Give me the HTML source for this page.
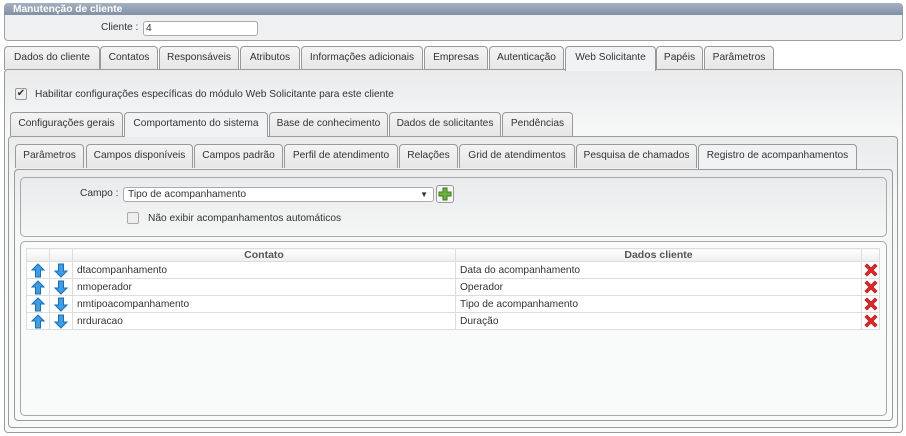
<!DOCTYPE html>
<html><head><meta charset="utf-8"><style>
*{box-sizing:border-box;margin:0;padding:0}
body{width:906px;height:436px;background:#fff;font-family:"Liberation Sans",sans-serif;font-size:10.2px;color:#333;position:relative;overflow:hidden}
.a{position:absolute}
.hdr{left:4px;top:3px;width:899px;height:13px;background:linear-gradient(#a4b1c0,#7d8ea2);border-radius:4px 4px 0 0;color:#fff;font-weight:bold;font-size:10.2px;padding-left:9px;line-height:13px}
.cp{left:4px;top:15px;width:899px;height:26px;background:#eef0f1;border:1px solid #a0a0a0;border-top:none;border-radius:0 0 4px 4px}
.inp{background:#fff;border:1px solid #aaa;border-radius:3px;height:15px;line-height:13px;padding-left:2px}
.tab{position:absolute;height:24px;border:1px solid #999;border-bottom:none;border-radius:4px 4px 0 0;background:linear-gradient(#f4f4f4,#e6e6e6);text-align:center;line-height:22px;white-space:nowrap;color:#333}
.tab.on{background:#f0f2f3;height:25px;z-index:2}
.pan{position:absolute;border:1px solid #9a9a9a;border-radius:4px;background:linear-gradient(#e9ebec,#f6f7f7 60px,#f9fafa)}
.fs{position:absolute;border:1px solid #a8a8a8;border-radius:5px;background:linear-gradient(#e9ebec,#f5f6f6)}
table{border-collapse:collapse;table-layout:fixed;position:absolute;left:26px;top:248px;width:853px;background:#fff}
td{border:1px solid #ddd;height:17px;padding:0 4px;font-size:10.2px;overflow:hidden;white-space:nowrap}
th{border:1px solid #ddd;height:13px;background:linear-gradient(#fff,#eee);font-weight:bold;color:#555;font-size:10.5px;line-height:11px}
td.i{padding:0;text-align:center}
</style></head><body>
<div class="a hdr">Manutenção de cliente</div>
<div class="a cp"></div>
<div class="a" style="left:101px;top:22px">Cliente :</div>
<div class="a inp" style="left:143px;top:21px;width:115px">4</div>

<div class="tab" style="left:4px;top:46px;width:96px">Dados do cliente</div>
<div class="tab" style="left:100px;top:46px;width:58px">Contatos</div>
<div class="tab" style="left:159px;top:46px;width:80px">Responsáveis</div>
<div class="tab" style="left:240px;top:46px;width:60px">Atributos</div>
<div class="tab" style="left:301px;top:46px;width:122px">Informações adicionais</div>
<div class="tab" style="left:424px;top:46px;width:64px">Empresas</div>
<div class="tab" style="left:489px;top:46px;width:75px">Autenticação</div>
<div class="tab on" style="left:565px;top:46px;width:91px">Web Solicitante</div>
<div class="tab" style="left:656px;top:46px;width:47px">Papéis</div>
<div class="tab" style="left:704px;top:46px;width:70px">Parâmetros</div>
<div class="pan" style="left:4px;top:69px;width:899px;height:364px"></div>

<div class="a" style="left:15px;top:88px;width:12px;height:12px;border:1px solid #999;border-radius:2px;background:#eee;font-size:10px;line-height:10px;text-align:center">✔</div>
<div class="a" style="left:35px;top:89px">Habilitar configurações específicas do módulo Web Solicitante para este cliente</div>

<div class="tab" style="left:10px;top:112px;width:113px">Configurações gerais</div>
<div class="tab on" style="left:124px;top:112px;width:144px">Comportamento do sistema</div>
<div class="tab" style="left:269px;top:112px;width:119px">Base de conhecimento</div>
<div class="tab" style="left:389px;top:112px;width:112px">Dados de solicitantes</div>
<div class="tab" style="left:502px;top:112px;width:71px">Pendências</div>
<div class="pan" style="left:8px;top:136px;width:890px;height:292px"></div>

<div class="tab" style="left:15px;top:144px;width:69px">Parâmetros</div>
<div class="tab" style="left:86px;top:144px;width:107px">Campos disponíveis</div>
<div class="tab" style="left:194px;top:144px;width:89px">Campos padrão</div>
<div class="tab" style="left:284px;top:144px;width:114px">Perfil de atendimento</div>
<div class="tab" style="left:399px;top:144px;width:59px">Relações</div>
<div class="tab" style="left:459px;top:144px;width:116px">Grid de atendimentos</div>
<div class="tab" style="left:576px;top:144px;width:121px">Pesquisa de chamados</div>
<div class="tab on" style="left:698px;top:144px;width:159px">Registro de acompanhamentos</div>
<div class="pan" style="left:14px;top:169px;width:879px;height:252px"></div>

<div class="fs" style="left:20px;top:177px;width:867px;height:60px"></div>
<div class="a" style="left:80px;top:188px">Campo :</div>
<div class="a inp" style="left:123px;top:187px;width:311px;padding-left:4px">Tipo de acompanhamento<span style="position:absolute;right:5px;top:0;font-size:8px">▼</span></div>
<div class="a" style="left:436px;top:185px;width:18px;height:18px;border:1px solid #999;border-radius:3px;background:#f5f5f5">
<svg width="16" height="16" viewBox="0 0 16 16"><path d="M6 2h4v4h4v4h-4v4H6v-4H2V6h4z" fill="#6cb33e" stroke="#3d7a1e"/></svg></div>
<div class="a" style="left:127px;top:212px;width:12px;height:12px;border:1px solid #aaa;border-radius:2px;background:#eee"></div>
<div class="a" style="left:148px;top:213px">Não exibir acompanhamentos automáticos</div>

<div class="fs" style="left:20px;top:241px;width:867px;height:175px;background:#f9fafa"></div>
<table>
<colgroup><col style="width:23px"><col style="width:23px"><col style="width:383px"><col style="width:406px"><col style="width:18px"></colgroup>
<tr><th></th><th></th><th>Contato</th><th>Dados cliente</th><th></th></tr>
<tr><td class="i">UP</td><td class="i">DN</td><td>dtacompanhamento</td><td>Data do acompanhamento</td><td class="i">X</td></tr>
<tr><td class="i">UP</td><td class="i">DN</td><td>nmoperador</td><td>Operador</td><td class="i">X</td></tr>
<tr><td class="i">UP</td><td class="i">DN</td><td>nmtipoacompanhamento</td><td>Tipo de acompanhamento</td><td class="i">X</td></tr>
<tr><td class="i">UP</td><td class="i">DN</td><td>nrduracao</td><td>Duração</td><td class="i">X</td></tr>
</table>
<script>
var up='<svg width="14" height="15" viewBox="0 0 14 15" style="display:block;margin:auto"><path d="M7 1L13 7H9.5V14H4.5V7H1z" fill="#3a9ee8" stroke="#1a6fb8"/></svg>';
var dn='<svg width="14" height="15" viewBox="0 0 14 15" style="display:block;margin:auto"><path d="M7 14L13 8H9.5V1H4.5V8H1z" fill="#3a9ee8" stroke="#1a6fb8"/></svg>';
var x='<svg width="14" height="14" viewBox="0 0 14 14" style="display:block;margin:auto"><path d="M3 1L7 5 11 1 13 3 9 7 13 11 11 13 7 9 3 13 1 11 5 7 1 3z" fill="#e8262a" stroke="#b01010" stroke-width=".7"/></svg>';
document.querySelectorAll('td.i').forEach(function(t){t.innerHTML=t.textContent=='UP'?up:t.textContent=='DN'?dn:x;});
</script>
</body></html>
